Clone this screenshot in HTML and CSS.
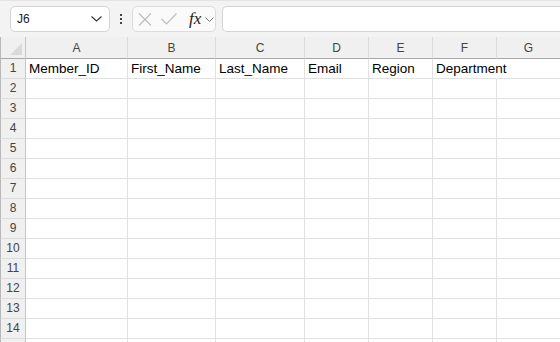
FILE: index.html
```html
<!DOCTYPE html>
<html lang="en">
  <head>
    <meta charset="UTF-8" />
    <meta name="viewport" content="width=device-width, initial-scale=1.0" />
    <title>Members</title>
    <link rel="stylesheet" href="styles.css">
  </head>
  <body>
    <div id="formulaBar">
      <div class="nameBox">
        <span>J6</span>
        <svg width="11" height="6" viewBox="0 0 11 6"><path d="M0.5 0.5 L5.5 5 L10.5 0.5" fill="none" stroke="#333" stroke-width="1.1"/></svg>
      </div>
      <div class="grip"><i></i><i></i><i></i></div>
      <div class="fxButtons">
        <svg width="14" height="13" viewBox="0 0 14 13"><path d="M1 0.5 L13 12.5 M13 0.5 L1 12.5" stroke="#bdbdbd" stroke-width="1.1"/></svg>
        <svg width="16" height="12" viewBox="0 0 16 12"><path d="M0.5 6 L5.5 11 L15.5 0.5" fill="none" stroke="#bdbdbd" stroke-width="1.1"/></svg>
        <span class="fx">fx</span>
        <svg width="9" height="5" viewBox="0 0 9 5"><path d="M0.5 0.5 L4.5 4.5 L8.5 0.5" fill="none" stroke="#777" stroke-width="1"/></svg>
      </div>
      <div class="formulaInput"></div>
    </div>

    <div id="sheet">
      <div class="corner"><span class="triangle"></span></div><div class="colHead">A</div><div class="colHead">B</div><div class="colHead">C</div><div class="colHead">D</div><div class="colHead">E</div><div class="colHead">F</div><div class="colHead">G</div>
      <div class="rowHead">1</div><div class="cell">Member_ID</div><div class="cell">First_Name</div><div class="cell">Last_Name</div><div class="cell">Email</div><div class="cell">Region</div><div class="cell spill">Department</div><div class="cell"></div>
      <div class="rowHead">2</div><div class="cell"></div><div class="cell"></div><div class="cell"></div><div class="cell"></div><div class="cell"></div><div class="cell"></div><div class="cell"></div>
      <div class="rowHead">3</div><div class="cell"></div><div class="cell"></div><div class="cell"></div><div class="cell"></div><div class="cell"></div><div class="cell"></div><div class="cell"></div>
      <div class="rowHead">4</div><div class="cell"></div><div class="cell"></div><div class="cell"></div><div class="cell"></div><div class="cell"></div><div class="cell"></div><div class="cell"></div>
      <div class="rowHead">5</div><div class="cell"></div><div class="cell"></div><div class="cell"></div><div class="cell"></div><div class="cell"></div><div class="cell"></div><div class="cell"></div>
      <div class="rowHead">6</div><div class="cell"></div><div class="cell"></div><div class="cell"></div><div class="cell"></div><div class="cell"></div><div class="cell"></div><div class="cell"></div>
      <div class="rowHead">7</div><div class="cell"></div><div class="cell"></div><div class="cell"></div><div class="cell"></div><div class="cell"></div><div class="cell"></div><div class="cell"></div>
      <div class="rowHead">8</div><div class="cell"></div><div class="cell"></div><div class="cell"></div><div class="cell"></div><div class="cell"></div><div class="cell"></div><div class="cell"></div>
      <div class="rowHead">9</div><div class="cell"></div><div class="cell"></div><div class="cell"></div><div class="cell"></div><div class="cell"></div><div class="cell"></div><div class="cell"></div>
      <div class="rowHead">10</div><div class="cell"></div><div class="cell"></div><div class="cell"></div><div class="cell"></div><div class="cell"></div><div class="cell"></div><div class="cell"></div>
      <div class="rowHead">11</div><div class="cell"></div><div class="cell"></div><div class="cell"></div><div class="cell"></div><div class="cell"></div><div class="cell"></div><div class="cell"></div>
      <div class="rowHead">12</div><div class="cell"></div><div class="cell"></div><div class="cell"></div><div class="cell"></div><div class="cell"></div><div class="cell"></div><div class="cell"></div>
      <div class="rowHead">13</div><div class="cell"></div><div class="cell"></div><div class="cell"></div><div class="cell"></div><div class="cell"></div><div class="cell"></div><div class="cell"></div>
      <div class="rowHead">14</div><div class="cell"></div><div class="cell"></div><div class="cell"></div><div class="cell"></div><div class="cell"></div><div class="cell"></div><div class="cell"></div>
      <div class="rowHead"></div><div class="cell"></div><div class="cell"></div><div class="cell"></div><div class="cell"></div><div class="cell"></div><div class="cell"></div><div class="cell"></div>
    </div>
  </body>
</html>
```

FILE: styles.css
```css
body {
  margin: 0;
  height: 342px;
  overflow: hidden;
  background-color: #fff;
  font-family: "Liberation Sans", Arial, sans-serif;
  color: #000;
}
#formulaBar {
  height: 37px;
  box-sizing: border-box;
  border-top: 1px solid #e3e3e3;
  background-color: #f3f3f3;
  display: flex;
  align-items: center;
  padding: 0 0 0 10px;
}
.nameBox {
  width: 100px;
  height: 26px;
  box-sizing: border-box;
  border: 1px solid #d4d4d4;
  border-radius: 5px;
  background-color: #fff;
  display: flex;
  align-items: center;
  justify-content: space-between;
  padding: 0 7px 0 6px;
  font-size: 12px;
  color: #222;
}
.grip {
  width: 22px;
  display: flex;
  flex-direction: column;
  align-items: center;
  gap: 2px;
}
.grip i {
  width: 2px;
  height: 2px;
  background-color: #444;
}
.fxButtons {
  width: 84px;
  height: 26px;
  box-sizing: border-box;
  border: 1px solid #dcdcdc;
  border-radius: 5px;
  background-color: #fafafa;
  display: flex;
  align-items: center;
  padding: 0 0 0 5px;
  gap: 8px;
}
.fxButtons svg:nth-child(2) {
  margin-left: 1px;
}
.fx {
  font-family: "Liberation Serif", serif;
  font-style: italic;
  font-size: 17px;
  color: #222;
  margin-left: 4px;
  margin-right: -4px;
}
.formulaInput {
  flex: 1;
  height: 26px;
  box-sizing: border-box;
  margin-left: 6px;
  border: 1px solid #d4d4d4;
  border-right: none;
  border-radius: 5px 0 0 5px;
  background-color: #fff;
}
#sheet {
  display: grid;
  grid-template-columns: 26px 102px 88px 89px 64px 64px 64px 64px;
  grid-template-rows: 22px;
  grid-auto-rows: 20px;
}
.corner {
  background-color: #f0f0f0;
  border-right: 1px solid #c6c6c6;
  border-bottom: 1px solid #a8a8a8;
  border-left: 1px solid #b8b8b8;
  box-sizing: border-box;
  position: relative;
}
.triangle {
  position: absolute;
  right: 3px;
  bottom: 3px;
  width: 0;
  height: 0;
  border-left: 12px solid transparent;
  border-bottom: 12px solid #dadada;
}
.colHead {
  background-color: #f0f0f0;
  border-right: 1px solid #dadada;
  border-bottom: 1px solid #a8a8a8;
  box-sizing: border-box;
  font-size: 12px;
  color: #444;
  text-align: center;
  line-height: 21px;
  padding-top: 1px;
}
.rowHead {
  background-color: #f0f0f0;
  border-right: 1px solid #c6c6c6;
  border-bottom: 1px solid #dcdcdc;
  border-left: 1px solid #b8b8b8;
  box-sizing: border-box;
  font-size: 12px;
  color: #444;
  text-align: center;
  line-height: 19px;
}
.cell {
  border-right: 1px solid #e1e1e1;
  border-bottom: 1px solid #e1e1e1;
  box-sizing: border-box;
  font-size: 13.5px;
  line-height: 19px;
  padding-left: 3px;
  white-space: nowrap;
}
.spill {
  border-right-color: #fff;
}
```
